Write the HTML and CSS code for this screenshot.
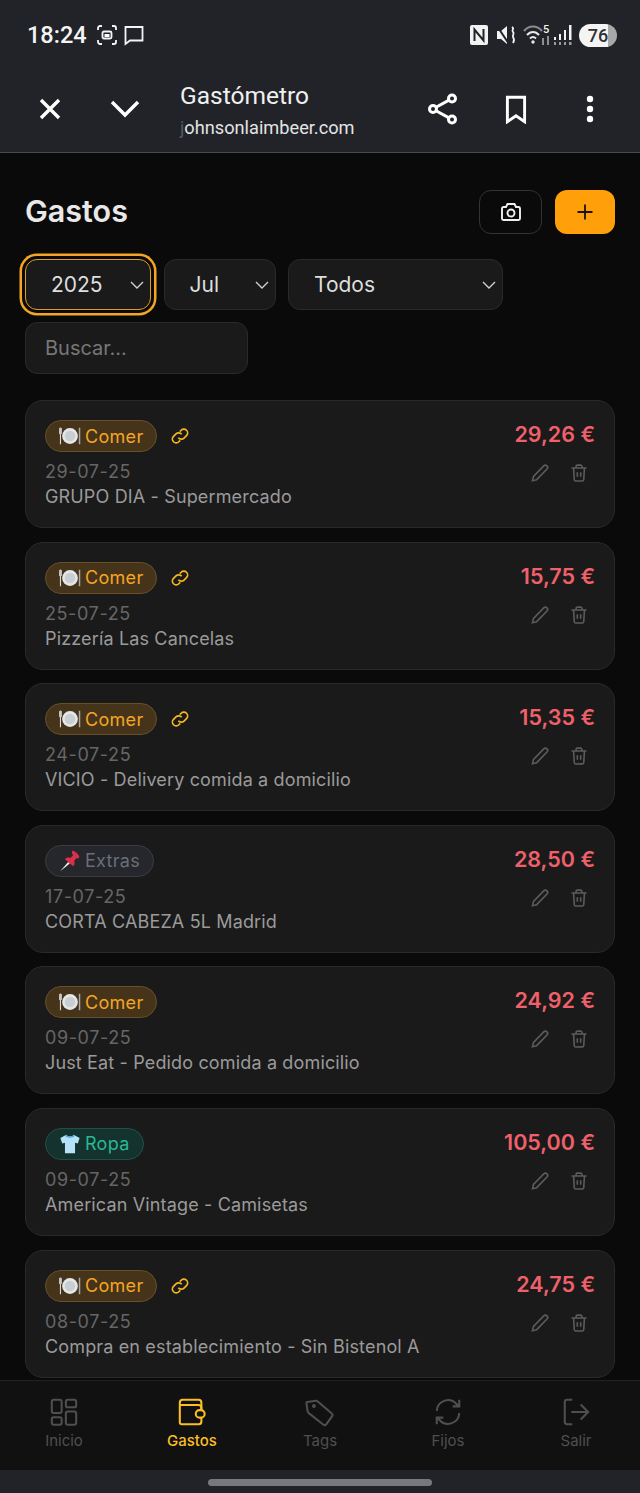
FILE: index.html
```html
<!DOCTYPE html>
<html lang="es">
<head>
  <meta charset="UTF-8">
  <meta name="viewport" content="width=device-width, initial-scale=1.0">
  <title>Gastómetro</title>
  <link rel="stylesheet" href="styles.css">
</head>
<body>
  <svg class="defs" width="0" height="0">
    <symbol id="i-plate" viewBox="0 0 24 24">
      <rect x="1" y="3" width="1.2" height="18" fill="#d8d8d8"/><rect x="0" y="3" width="3.2" height="7" rx="1" fill="#c4c4c4"/>
      <rect x="21.6" y="3" width="1.6" height="18" fill="#a8a8a8"/>
      <circle cx="12" cy="12" r="8.6" fill="#e6e6e6"/><circle cx="12" cy="12" r="5.8" fill="#c9ced3"/>
    </symbol>
    <symbol id="i-pin" viewBox="0 0 24 24">
      <path d="M1 23.500 10 13l1.800 1.600z" fill="#ececec"/>
      <path d="M14.500 1c1.800-1 8 4.500 7.600 7-.3 1.300-2 1.400-3.200 1.100l-2.400 3c.9 2.200.5 4.600-1 5.700L6.500 10c1.100-1.800 3.600-2.200 5.800-1.400l3-2.600c-.6-1.400-2-3.700-.8-5z" fill="#dc2f4b"/>
    </symbol>
    <symbol id="i-shirt" viewBox="0 0 24 24">
      <path d="M8 2 1.500 5.500l2 6 3-1V22h11V10.500l3 1 2-6L16 2c-1 2.400-7 2.400-8 0z" fill="#b5e2f7"/>
      <path d="M8 2c1 2.400 7 2.400 8 0l1.500.8C16 6 8 6 6.500 2.800z" fill="#4aa8e0"/>
    </symbol>
    <symbol id="i-link" viewBox="0 0 24 24">
      <path d="M10 14a4.500 4.500 0 0 0 6.800.5l3-3a4.500 4.500 0 0 0-6.400-6.400l-1.700 1.700"/>
      <path d="M14 10a4.500 4.500 0 0 0-6.800-.5l-3 3a4.500 4.500 0 0 0 6.400 6.400l1.700-1.700"/>
    </symbol>
    <symbol id="i-edit" viewBox="0 0 24 24">
      <path d="M16.500 3.500a2.600 2.600 0 0 1 3.900 3.700L8 20l-5 1.200L4.200 16z"/>
    </symbol>
    <symbol id="i-trash" viewBox="0 0 24 24">
      <path d="M3 6h18M8.500 6V4a1.500 1.500 0 0 1 1.500-1.500h4A1.500 1.500 0 0 1 15.500 4v2M5.500 6l.8 14a1.800 1.800 0 0 0 1.800 1.500h7.800a1.800 1.800 0 0 0 1.800-1.500l.8-14M10 11v5.500M14 11v5.500"/>
    </symbol>
    <symbol id="i-chev" viewBox="0 0 24 24">
      <path d="m4 8 8 8 8-8"/>
    </symbol>
  </svg>

  <div class="phone">
    <header class="chrome">
      <div class="status">
        <div class="status-left">
          <span class="clock">18:24</span>
          <svg class="st-icon" width="22" height="22" viewBox="0 0 22 22"><path d="M2 6V4a2 2 0 0 1 2-2h2M16 2h2a2 2 0 0 1 2 2v2M20 16v2a2 2 0 0 1-2 2h-2M6 20H4a2 2 0 0 1-2-2v-2"/><rect x="6.500" y="7.500" width="9" height="7" rx="1.500"/><rect x="8.500" y="10" width="5" height="3" fill="#fff" stroke="none"/></svg>
          <svg class="st-icon" width="22" height="22" viewBox="0 0 22 22"><path d="M2.500 3h17v13.500H7L2.500 20z"/></svg>
        </div>
        <div class="status-right">
          <svg class="st-nfc" width="18" height="20" viewBox="0 0 18 20"><rect width="18" height="20" rx="2" fill="#f2f2f2"/><path d="M4.500 16V4.500l9 11V4" fill="none" stroke="#212328" stroke-width="2"/></svg>
          <svg width="21" height="22" viewBox="0 0 21 22"><path d="M1 7h4l6-5v18l-6-5H1z" fill="#f2f2f2"/><path d="m1 2 12 18" stroke="#212328" stroke-width="2"/><path d="M16 3c3 2-1 3 1 5s-1 3 0 5 2 3 0 6" fill="none" stroke="#f2f2f2" stroke-width="1.800"/></svg>
          <svg class="st-wifi" width="27" height="24" viewBox="0 0 27 24"><path d="M1 8c5-6 13-6 18 0" fill="none" stroke="#8b8d90" stroke-width="2"/><path d="M4 12c3.500-4 8.500-4 12 0" fill="none" stroke="#e8e8e8" stroke-width="2"/><path d="M7 15.500c2-2 4-2 6 0" fill="none" stroke="#e8e8e8" stroke-width="2"/><circle cx="10" cy="19" r="1.700" fill="#e8e8e8"/><path d="M19 15h2v7h-2zM24 13h2v9h-2z" fill="#8b8d90"/><text x="20" y="10" class="wifi-five">5</text></svg>
          <svg width="20" height="22" viewBox="0 0 20 22"><path d="M1 13h2v3H1zM6 10h2v6H6zM11 6h2v10h-2zM16 1h2.500v15H16z" fill="#f2f2f2"/><path d="M1 18h2v3H1zM6 18h2v3H6zM11 18h2v3h-2zM16 18h2.500v3H16z" fill="#9a9a9a"/></svg>
          <div class="battery"><span>76</span></div>
        </div>
      </div>
      <div class="toolbar">
        <button class="tb-btn"><svg width="28" height="28" viewBox="0 0 28 28"><path d="m5 5 18 18M23 5 5 23"/></svg></button>
        <button class="tb-btn"><svg width="32" height="28" viewBox="0 0 32 28"><path d="m3 7 13 13L29 7"/></svg></button>
        <div class="tb-title">
          <div class="site-name">Gastómetro</div>
          <div class="site-url"><span class="fade">j</span>ohnsonlaimbeer.com</div>
        </div>
        <button class="tb-btn"><svg class="ic-share" width="32" height="34" viewBox="0 0 32 34"><circle cx="25" cy="6.500" r="3.500"/><circle cx="25" cy="27.500" r="3.500"/><circle cx="6" cy="17" r="3.500"/><path d="m9 15.300 13-7.200M9 18.700l13 7.200"/></svg></button>
        <button class="tb-btn"><svg class="ic-mark" width="22" height="29" viewBox="0 0 24 32"><path d="M2.500 2.500h19v27L12 23l-9.500 6.500z"/></svg></button>
        <button class="tb-btn"><svg width="10" height="28" viewBox="0 0 10 28"><circle cx="5" cy="4" r="3.200" class="solid"/><circle cx="5" cy="14" r="3.200" class="solid"/><circle cx="5" cy="24" r="3.200" class="solid"/></svg></button>
      </div>
    </header>

    <main class="content">
      <div class="page-head">
        <h1>Gastos</h1>
        <div class="head-actions">
          <button class="btn-photo"><svg width="24" height="24" viewBox="0 0 24 24"><path d="M3 8.500A1.500 1.500 0 0 1 4.500 7H7l1.500-3h7L17 7h2.500A1.500 1.500 0 0 1 21 8.500v10a1.500 1.500 0 0 1-1.500 1.500h-15A1.500 1.500 0 0 1 3 18.500z"/><circle cx="12" cy="13" r="3.500"/></svg></button>
          <button class="btn-add"><svg width="20" height="20" viewBox="0 0 20 20"><path d="M10 2.500v15M2.500 10h15"/></svg></button>
        </div>
      </div>

      <div class="filters">
        <div class="select select-year focused">2025<svg class="chev"><use href="#i-chev"/></svg></div>
        <div class="select select-month">Jul<svg class="chev"><use href="#i-chev"/></svg></div>
        <div class="select select-tag">Todos<svg class="chev"><use href="#i-chev"/></svg></div>
        <div class="search">Buscar...</div>
      </div>

      <div class="list">
        <article class="card">
          <div class="card-info">
            <div class="tag-row"><span class="tag tag-food"><svg class="emoji"><use href="#i-plate"/></svg>Comer</span><svg class="link"><use href="#i-link"/></svg></div>
            <div class="date">29-07-25</div>
            <div class="desc">GRUPO DIA - Supermercado</div>
          </div>
          <div class="card-side">
            <div class="amount">29,26 €</div>
            <div class="actions"><svg class="act"><use href="#i-edit"/></svg><svg class="act"><use href="#i-trash"/></svg></div>
          </div>
        </article>
        <article class="card">
          <div class="card-info">
            <div class="tag-row"><span class="tag tag-food"><svg class="emoji"><use href="#i-plate"/></svg>Comer</span><svg class="link"><use href="#i-link"/></svg></div>
            <div class="date">25-07-25</div>
            <div class="desc">Pizzería Las Cancelas</div>
          </div>
          <div class="card-side">
            <div class="amount">15,75 €</div>
            <div class="actions"><svg class="act"><use href="#i-edit"/></svg><svg class="act"><use href="#i-trash"/></svg></div>
          </div>
        </article>
        <article class="card">
          <div class="card-info">
            <div class="tag-row"><span class="tag tag-food"><svg class="emoji"><use href="#i-plate"/></svg>Comer</span><svg class="link"><use href="#i-link"/></svg></div>
            <div class="date">24-07-25</div>
            <div class="desc">VICIO - Delivery comida a domicilio</div>
          </div>
          <div class="card-side">
            <div class="amount">15,35 €</div>
            <div class="actions"><svg class="act"><use href="#i-edit"/></svg><svg class="act"><use href="#i-trash"/></svg></div>
          </div>
        </article>
        <article class="card">
          <div class="card-info">
            <div class="tag-row"><span class="tag tag-extra"><svg class="emoji"><use href="#i-pin"/></svg>Extras</span></div>
            <div class="date">17-07-25</div>
            <div class="desc">CORTA CABEZA 5L Madrid</div>
          </div>
          <div class="card-side">
            <div class="amount">28,50 €</div>
            <div class="actions"><svg class="act"><use href="#i-edit"/></svg><svg class="act"><use href="#i-trash"/></svg></div>
          </div>
        </article>
        <article class="card">
          <div class="card-info">
            <div class="tag-row"><span class="tag tag-food"><svg class="emoji"><use href="#i-plate"/></svg>Comer</span></div>
            <div class="date">09-07-25</div>
            <div class="desc">Just Eat - Pedido comida a domicilio</div>
          </div>
          <div class="card-side">
            <div class="amount">24,92 €</div>
            <div class="actions"><svg class="act"><use href="#i-edit"/></svg><svg class="act"><use href="#i-trash"/></svg></div>
          </div>
        </article>
        <article class="card">
          <div class="card-info">
            <div class="tag-row"><span class="tag tag-clothes"><svg class="emoji"><use href="#i-shirt"/></svg>Ropa</span></div>
            <div class="date">09-07-25</div>
            <div class="desc">American Vintage - Camisetas</div>
          </div>
          <div class="card-side">
            <div class="amount">105,00 €</div>
            <div class="actions"><svg class="act"><use href="#i-edit"/></svg><svg class="act"><use href="#i-trash"/></svg></div>
          </div>
        </article>
        <article class="card">
          <div class="card-info">
            <div class="tag-row"><span class="tag tag-food"><svg class="emoji"><use href="#i-plate"/></svg>Comer</span><svg class="link"><use href="#i-link"/></svg></div>
            <div class="date">08-07-25</div>
            <div class="desc">Compra en establecimiento - Sin Bistenol A</div>
          </div>
          <div class="card-side">
            <div class="amount">24,75 €</div>
            <div class="actions"><svg class="act"><use href="#i-edit"/></svg><svg class="act"><use href="#i-trash"/></svg></div>
          </div>
        </article>
      </div>
    </main>

    <nav class="bottom-nav">
      <a class="nav-item"><svg viewBox="0 0 32 32"><rect x="3" y="3" width="10.500" height="14" rx="2"/><rect x="18" y="3" width="11" height="8" rx="2"/><rect x="3" y="21.500" width="10.500" height="8" rx="2"/><rect x="18" y="15.500" width="11" height="14" rx="2"/></svg>Inicio</a>
      <a class="nav-item active"><svg viewBox="0 0 32 32"><path d="M26 13V6a3 3 0 0 0-3-3H6a3 3 0 0 0-3 3v21a2 2 0 0 0 2 2h18a3 3 0 0 0 3-3v-4"/><path d="M3 8.500h20a3 3 0 0 1 3 3v2"/><rect x="20" y="14" width="9.500" height="8" rx="4"/></svg>Gastos</a>
      <a class="nav-item"><svg viewBox="0 0 32 32"><path d="M4 3.500h9a3 3 0 0 1 2.200 1L28 19a2.500 2.500 0 0 1 0 3.400l-7 7.300a2.500 2.500 0 0 1-3.500 0L4 15.500a3 3 0 0 1-1-2.200V4.500a1 1 0 0 1 1-1z" transform="rotate(-8 16 16)"/><circle cx="9.500" cy="9.500" r="1" class="dot"/></svg>Tags</a>
      <a class="nav-item"><svg viewBox="0 0 32 32"><path d="M4 15a12 12 0 0 1 21-7.500L28 10M28 3v7h-7M28 17a12 12 0 0 1-21 7.500L4 22M4 29v-7h7"/></svg>Fijos</a>
      <a class="nav-item"><svg viewBox="0 0 32 32"><path d="M12 3H6.500A2.500 2.500 0 0 0 4 5.500v21A2.500 2.500 0 0 0 6.500 29H12M11 16h18M21 8l8 8-8 8"/></svg>Salir</a>
    </nav>

    <div class="gesture-bar"><span class="handle"></span></div>
  </div>
</body>
</html>
```

FILE: styles.css
```css
* { box-sizing: border-box; }
html, body { margin: 0; padding: 0; height: 100%; }
body { background: #0a0a0a; font-family: "Inter", "Liberation Sans", sans-serif; overflow: hidden; }
button { border: none; background: none; padding: 0; margin: 0; font: inherit; }
h1 { margin: 0; }
.defs { position: absolute; }

.phone { width: 640px; height: 1493px; display: flex; flex-direction: column; }

/* browser chrome */
.chrome { height: 153px; flex: none; background: #212328; border-bottom: 1px solid #4a4b4e; font-family: "Roboto", sans-serif; color: #fff; }
.status { height: 70px; display: flex; align-items: center; justify-content: space-between; padding: 0 23px 0 27px; }
.status-left { display: flex; align-items: center; gap: 5px; }
.clock { font-size: 23.500px; font-weight: 500; margin-right: 4px; color: #f4f4f4; }
.st-icon { fill: none; stroke: #f4f4f4; stroke-width: 1.800; }
.status-right { display: flex; align-items: center; gap: 6px; }
.st-nfc { margin-right: 2px; }
.st-wifi { margin-right: -3px; }
.wifi-five { font: 500 11px "Roboto", sans-serif; fill: #f2f2f2; }
.battery { width: 38px; height: 23px; border-radius: 12px; background: linear-gradient(90deg, #f4f4f4 76%, #a8a8a8 76%); display: flex; align-items: center; justify-content: center; }
.battery span { font-size: 18px; font-weight: 500; color: #303134; }

.toolbar { height: 82px; display: flex; align-items: center; padding: 0 13px 0 12px; }
.tb-btn { width: 75px; height: 60px; flex: none; display: flex; align-items: center; justify-content: center; margin-top: -4px; }
.tb-btn svg { fill: none; stroke: #fff; stroke-width: 3.400; }
.tb-btn svg .solid { fill: #fff; stroke: none; }
.tb-btn .ic-share { stroke-width: 3; margin-left: 6px; }
.tb-btn .ic-mark { stroke-width: 3.200; margin-left: 2px; }
.tb-title { flex: 1; padding-left: 18px; margin-top: -2px; }
.site-name { font-size: 24.500px; line-height: 30px; color: #f0f0f0; }
.site-url { font-size: 18.200px; line-height: 24px; margin-top: 5px; color: #e4e4e4; }
.fade { color: #55575b; }

/* main area */
.content { flex: 1; min-height: 0; overflow: hidden; padding: 37px 25px 0; background: #0a0a0a; }
.page-head { display: flex; align-items: center; justify-content: space-between; height: 44px; }
.page-head h1 { font-size: 30.500px; font-weight: 600; color: #e8e8e8; margin-top: -4px; }
.head-actions { display: flex; gap: 13px; }
.btn-photo { width: 63px; height: 44px; border-radius: 12px; border: 1px solid #333; background: #0a0a0a; display: flex; align-items: center; justify-content: center; }
.btn-photo svg { fill: none; stroke: #f0f0f0; stroke-width: 1.900; }
.btn-add { width: 60px; height: 44px; border-radius: 12px; background: #ff9f0a; display: flex; align-items: center; justify-content: center; }
.btn-add svg { fill: none; stroke: #1a1206; stroke-width: 1.800; }

.filters { display: flex; flex-wrap: wrap; gap: 12px 12.500px; margin-top: 25px; width: 590px; }
.select { height: 51px; padding: 0 4px 0 25px; border: 1px solid #2a2a2a; border-radius: 12px; background: #1a1a1a; color: #dedede; font-size: 21px; line-height: 48px; display: flex; align-items: center; justify-content: space-between; }
.select-year { width: 126px; }
.select-month { width: 112px; }
.select-tag { width: 215px; }
.focused { border-color: #e09a25; box-shadow: 0 0 0 3px #0a0a0a, 0 0 0 5.500px #f5a524; }
.chev { width: 18px; height: 18px; fill: none; stroke: #d0d0d0; stroke-width: 1.800; }
.search { width: 223px; height: 52px; padding-left: 19px; border: 1px solid #2a2a2a; border-radius: 12px; background: #1a1a1a; color: #777; font-size: 20px; display: flex; align-items: center; flex-basis: 223px; }

.list { display: flex; flex-direction: column; gap: 13.600px; margin-top: 26px; }
.card { height: 128px; flex: none; display: flex; justify-content: space-between; padding: 19px 19px 0; border: 1px solid #2a2a2a; border-radius: 18px; background: #1a1a1a; }
.tag-row { display: flex; align-items: center; gap: 13px; height: 32px; }
.tag { height: 32px; padding: 0 13px; border-radius: 16px; border: 1px solid; font-size: 18px; letter-spacing: .3px; display: inline-flex; align-items: center; gap: 4px; }
.tag-food { color: #f5a524; background: #45341a; border-color: #66502a; }
.tag-extra { color: #6a6e76; background: #25272c; border-color: #3a3c42; }
.tag-clothes { color: #2ab795; background: #14332e; border-color: #1f4f46; }
.emoji { width: 22px; height: 22px; flex: none; }
.link { width: 20px; height: 20px; fill: none; stroke: #f5b91f; stroke-width: 2; }
.date { font-size: 18px; line-height: 24px; margin-top: 8px; letter-spacing: .6px; color: #666; }
.desc { font-size: 18px; line-height: 24px; margin-top: 1px; letter-spacing: .15px; color: #9a9a9a; }
.card-side { display: flex; flex-direction: column; align-items: flex-end; }
.amount { font-size: 21.500px; font-weight: 600; line-height: 28px; color: #f0606a; }
.actions { display: flex; gap: 19px; margin-top: 15px; padding-right: 6px; }
.act { width: 20px; height: 20px; fill: none; stroke: #5c5c5c; stroke-width: 1.900; }

/* bottom nav */
.bottom-nav { height: 90px; flex: none; display: grid; grid-template-columns: repeat(5, 1fr); background: #111; border-top: 1px solid #222; }
.nav-item { display: flex; flex-direction: column; align-items: center; padding-top: 16px; font-size: 15px; color: #4f4f4f; gap: 4px; }
.nav-item svg { width: 30px; height: 30px; fill: none; stroke: #4f4f4f; stroke-width: 2.200; }
.nav-item .dot { fill: #4f4f4f; }
.nav-item.active { color: #fbbf24; font-weight: 500; }
.nav-item.active svg { stroke: #fbbf24; }

.gesture-bar { height: 23px; flex: none; background: #212328; display: flex; justify-content: center; padding-top: 9px; }
.handle { width: 224px; height: 7px; border-radius: 4px; background: #77787c; }
```
